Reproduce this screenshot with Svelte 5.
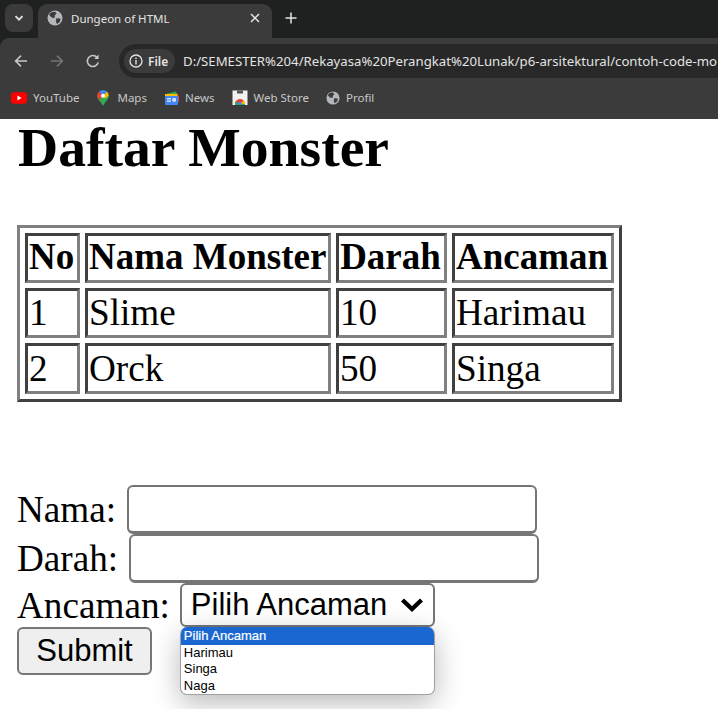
<script lang="ts">
  const monsters = [
    { no: 1, nama: "Slime", darah: 10, ancaman: "Harimau" },
    { no: 2, nama: "Orck", darah: 50, ancaman: "Singa" },
  ];
  const options = ["Pilih Ancaman", "Harimau", "Singa", "Naga"];
</script>

{#snippet globe(size: number)}
  <svg width={size} height={size} viewBox="0 0 16 16">
    <circle cx="8" cy="8" r="7.5" fill="#b4b7bb" />
    <path d="M2 4.5 C4 2 6 1.6 8 1.8 L9.6 3.6 L7.6 5.6 L8 7.4 L5.6 8 L3.6 6.6 Z" fill="#3b3b3b" />
    <path d="M9.4 8.2 L13.6 8.6 L12.8 12 L10 14 L8.8 11.4 Z" fill="#3b3b3b" />
  </svg>
{/snippet}

<div class="browser">
  <div class="tabstrip">
    <button class="tab-search" aria-label="Search tabs">
      <svg width="10" height="10" viewBox="0 0 10 10"><path d="M1.5 3.2 L5 6.7 L8.5 3.2" fill="none" stroke="#e3e3e3" stroke-width="1.8" /></svg>
    </button>
    <div class="tab">
      {@render globe(16)}
      <span class="tab-title">Dungeon of HTML</span>
      <svg class="tab-close" width="10" height="10" viewBox="0 0 10 10"><path d="M1 1 L9 9 M9 1 L1 9" stroke="#e3e3e3" stroke-width="1.5" /></svg>
    </div>
    <svg class="new-tab" width="12" height="12" viewBox="0 0 12 12"><path d="M6 .5 V11.5 M.5 6 H11.5" stroke="#e3e3e3" stroke-width="1.5" /></svg>
  </div>

  <div class="toolbar">
    <svg class="nav" width="16" height="16" viewBox="0 0 16 16"><path d="M14 8 H3 M8 2.6 L2.6 8 L8 13.4" fill="none" stroke="#c7c7c7" stroke-width="1.6" /></svg>
    <svg class="nav" width="16" height="16" viewBox="0 0 16 16"><path d="M2 8 H13 M8 2.6 L13.4 8 L8 13.4" fill="none" stroke="#757575" stroke-width="1.6" /></svg>
    <svg class="nav" width="16" height="16" viewBox="0 0 16 16"><path d="M13.2 9.4 A5.5 5.5 0 1 1 12 4.4" fill="none" stroke="#c7c7c7" stroke-width="1.6" /><path d="M13.6 1.6 V6 H9.2 Z" fill="#c7c7c7" /></svg>
    <div class="omnibox">
      <div class="chip">
        <svg width="14" height="14" viewBox="0 0 14 14"><circle cx="7" cy="7" r="6" fill="none" stroke="#e3e3e3" stroke-width="1.3" /><path d="M7 6 V10.4 M7 3.6 V5" stroke="#e3e3e3" stroke-width="1.4" /></svg>
        <span>File</span>
      </div>
      <span class="url">D:/SEMESTER%204/Rekayasa%20Perangkat%20Lunak/p6-arsitektural/contoh-code-mo</span>
    </div>
  </div>

  <div class="bookmarks">
    <div class="bm first">
      <svg width="16" height="12" viewBox="0 0 16 12"><rect width="16" height="11.4" y=".3" rx="3" fill="#f00" /><path d="M6.4 3.4 L10.6 6 L6.4 8.6 Z" fill="#fff" /></svg>
      <span>YouTube</span>
    </div>
    <div class="bm">
      <svg width="14" height="16" viewBox="0 0 14 16">
        <path d="M6 16 C4.6 12.6 .2 9.6 .2 5.8 L6 5.8 Z" fill="#34a853" />
        <path d="M.2 5.8 A5.8 5.8 0 0 1 2 1.6 L6 5.8 L2.6 9.8 C1.2 8.4 .2 7.4 .2 5.8 Z" fill="#ea4335" />
        <path d="M6 16 C7.4 12.6 11.8 9.6 11.8 5.8 L6 5.8 Z" fill="#34a853" />
        <path d="M2 1.6 A5.8 5.8 0 0 1 10 1.6 L6 5.8 Z" fill="#4285f4" />
        <path d="M10 1.6 A5.8 5.8 0 0 1 11.8 5.8 L8 8.4 L6 5.8 Z" fill="#fbbc04" />
        <circle cx="6" cy="5.8" r="2" fill="#fff" />
      </svg>
      <span>Maps</span>
    </div>
    <div class="bm">
      <svg width="15" height="14" viewBox="0 0 15 14">
        <path d="M2 3 L12 .6 L13 3 Z" fill="#34a853" />
        <path d="M1 3 H14 V5 H1 Z" fill="#fbbc04" />
        <path d="M13 3 L15 5 V11 H13 Z" fill="#ea4335" />
        <rect x="1" y="5" width="13" height="9" rx="1" fill="#4285f4" />
        <rect x="3" y="7" width="4" height="1.4" fill="#d2e3fc" />
        <rect x="3" y="9.4" width="4" height="1.4" fill="#d2e3fc" />
        <rect x="8.4" y="7" width="3.6" height="3.8" rx="1.2" fill="#d2e3fc" />
      </svg>
      <span>News</span>
    </div>
    <div class="bm">
      <svg width="16" height="15" viewBox="0 0 16 15">
        <rect x=".5" y=".5" width="15" height="14.5" fill="#f1f1f1" />
        <rect x="5" y=".5" width="6" height="3" fill="#555" />
        <path d="M3 14 A5 5 0 0 1 13 14 Z" fill="#ea4335" />
        <path d="M8 14 L13 14 A5 5 0 0 0 11.5 10.5 Z" fill="#fbbc04" />
        <path d="M8 14 L3 14 A5 5 0 0 1 3.8 11.2 Z" fill="#34a853" />
        <path d="M3 14 H13 V15 H3 Z" fill="#34a853" />
        <circle cx="8" cy="13.4" r="1.7" fill="#4285f4" />
      </svg>
      <span>Web Store</span>
    </div>
    <div class="bm">
      {@render globe(14)}
      <span>Profil</span>
    </div>
  </div>
</div>

<main class="page">
  <h1>Daftar Monster</h1>

  <table>
    <colgroup>
      <col class="c-no" /><col class="c-nama" /><col class="c-darah" /><col class="c-ancaman" />
    </colgroup>
    <thead>
      <tr><th>No</th><th>Nama Monster</th><th>Darah</th><th>Ancaman</th></tr>
    </thead>
    <tbody>
      {#each monsters as m (m.no)}
        <tr><td>{m.no}</td><td>{m.nama}</td><td>{m.darah}</td><td>{m.ancaman}</td></tr>
      {/each}
    </tbody>
  </table>

  <form class="form" onsubmit={(e) => e.preventDefault()}>
    <label class="line">Nama: <input type="text" /></label>
    <label class="line">Darah: <input type="text" /></label>
    <div class="line short">
      Ancaman:
      <span class="select-wrap">
        <span class="select">
          Pilih Ancaman
          <svg width="24" height="16" viewBox="0 0 24 16"><path d="M2.5 3 L12 12 L21.5 3" fill="none" stroke="#000" stroke-width="4.4" /></svg>
        </span>
        <div class="popup">
          {#each options as opt, i}
            <div class="opt" class:active={i === 0}>{opt}</div>
          {/each}
        </div>
      </span>
    </div>
    <button class="submit" type="submit">Submit</button>
  </form>
</main>

<style>
  :global(body) {
    margin: 0;
    min-height: 709px;
    background: #fff;
  }
  .browser {
    font-family: "Noto Sans", "Open Sans", sans-serif;
    background: #1f2020;
  }
  .tabstrip {
    height: 38px;
    box-sizing: border-box;
    padding: 4px 0 0 5px;
    display: flex;
    align-items: flex-start;
  }
  .tab-search {
    width: 28px;
    height: 28px;
    border: none;
    padding: 0;
    border-radius: 8px;
    background: #3b3b3b;
    display: flex;
    align-items: center;
    justify-content: center;
  }
  .tab {
    margin-left: 5px;
    width: 234px;
    height: 34px;
    box-sizing: border-box;
    padding: 0 12px 6px 9px;
    background: #3b3b3b;
    border-radius: 9px 9px 0 0;
    display: flex;
    align-items: center;
    gap: 8px;
    color: #e3e3e3;
    font-size: 11.5px;
  }
  .tab-title { flex: 1; }
  .new-tab { margin: 8px 0 0 13px; }
  .toolbar {
    height: 46px;
    box-sizing: border-box;
    background: #3b3b3b;
    border-radius: 9px 0 0 0;
    display: flex;
    align-items: center;
    padding: 0 0 0 13px;
  }
  .nav { flex: none; margin-right: 20px; }
  .nav:nth-child(3) { margin-right: 18px; }
  .omnibox {
    flex: 1;
    min-width: 0;
    height: 34px;
    margin-right: -1px;
    background: #282828;
    border-radius: 17px 0 0 17px;
    display: flex;
    align-items: center;
    padding-left: 5px;
    gap: 8px;
    overflow: hidden;
  }
  .chip {
    flex: none;
    width: 51px;
    height: 24px;
    box-sizing: border-box;
    padding-left: 5px;
    border-radius: 12px;
    background: #3b3b3b;
    display: flex;
    align-items: center;
    gap: 5px;
    color: #e3e3e3;
    font-size: 12px;
    font-weight: 600;
  }
  .url {
    white-space: nowrap;
    color: #e3e3e3;
    font-size: 13.2px;
  }
  .bookmarks {
    height: 35px;
    box-sizing: border-box;
    background: #3b3b3b;
    display: flex;
    align-items: center;
    padding: 0 0 8px 11px;
    gap: 17px;
    color: #c7c7c7;
    font-size: 11.5px;
  }
  .bm { display: flex; align-items: center; gap: 6px; }
  .bm.first { margin-right: 1px; }

  .page {
    padding: 0 17px;
    font-family: "Liberation Serif", "Times New Roman", serif;
    font-size: 37.2px;
    color: #000;
  }
  h1 {
    margin: 0 0 50px 1px;
    font-size: 55.6px;
    line-height: 56px;
    font-weight: bold;
  }
  table {
    table-layout: fixed;
    width: 604px;
    border-collapse: separate;
    border-spacing: 5px;
    border: 3px solid;
    border-color: #808080 #404040 #404040 #808080;
  }
  .c-no { width: 55px; }
  .c-nama { width: 246px; }
  .c-darah { width: 111px; }
  .c-ancaman { width: 162px; }
  th, td {
    padding: 2px 2px 2px 1px;
    border: 3px solid;
    border-color: #404040 #808080 #808080 #404040;
    text-align: left;
    line-height: 40px;
    white-space: nowrap;
  }
  th {
    padding: 1px 3px 3px 1px;
    text-align: center;
    font-size: 37px;
  }
  tbody tr:last-child td { padding-top: 3px; }
  .form {
    margin-top: 83px;
  }
  .line {
    display: flex;
    align-items: center;
    gap: 11px;
    height: 49px;
    white-space: nowrap;
  }
  .line.short {
    height: 44px;
    gap: 10px;
  }
  input {
    box-sizing: border-box;
    width: 410px;
    height: 49px;
    padding: 0;
    background: #fff;
    border: 2px solid #767676;
    border-bottom-width: 3px;
    border-radius: 6px;
  }
  .select-wrap {
    position: relative;
    display: block;
    font-family: "Liberation Sans", Arial, sans-serif;
    font-size: 31px;
  }
  .select {
    box-sizing: border-box;
    width: 255px;
    height: 44px;
    padding: 0 9px;
    display: flex;
    align-items: center;
    justify-content: space-between;
    background: #fff;
    border: 2px solid #767676;
    border-radius: 6px;
  }
  .popup {
    position: absolute;
    left: 0;
    top: 44px;
    width: 255px;
    box-sizing: border-box;
    background: #fff;
    border: 1px solid #a0a0a0;
    border-top: none;
    border-radius: 7px;
    overflow: hidden;
    box-shadow: 0 8px 28px rgba(0, 0, 0, 0.28);
    font-size: 13px;
    line-height: 16.5px;
  }
  .opt { padding-left: 3px; }
  .opt.active {
    background: #1a67d2;
    color: #fff;
    line-height: 17.5px;
    -webkit-text-stroke: 0.2px #fff;
  }
  .submit {
    display: block;
    box-sizing: border-box;
    width: 135px;
    height: 48px;
    padding: 0;
    background: #efefef;
    border: 2px solid #767676;
    border-radius: 6px;
    font-family: "Liberation Sans", Arial, sans-serif;
    font-size: 31px;
    color: #000;
  }
</style>
